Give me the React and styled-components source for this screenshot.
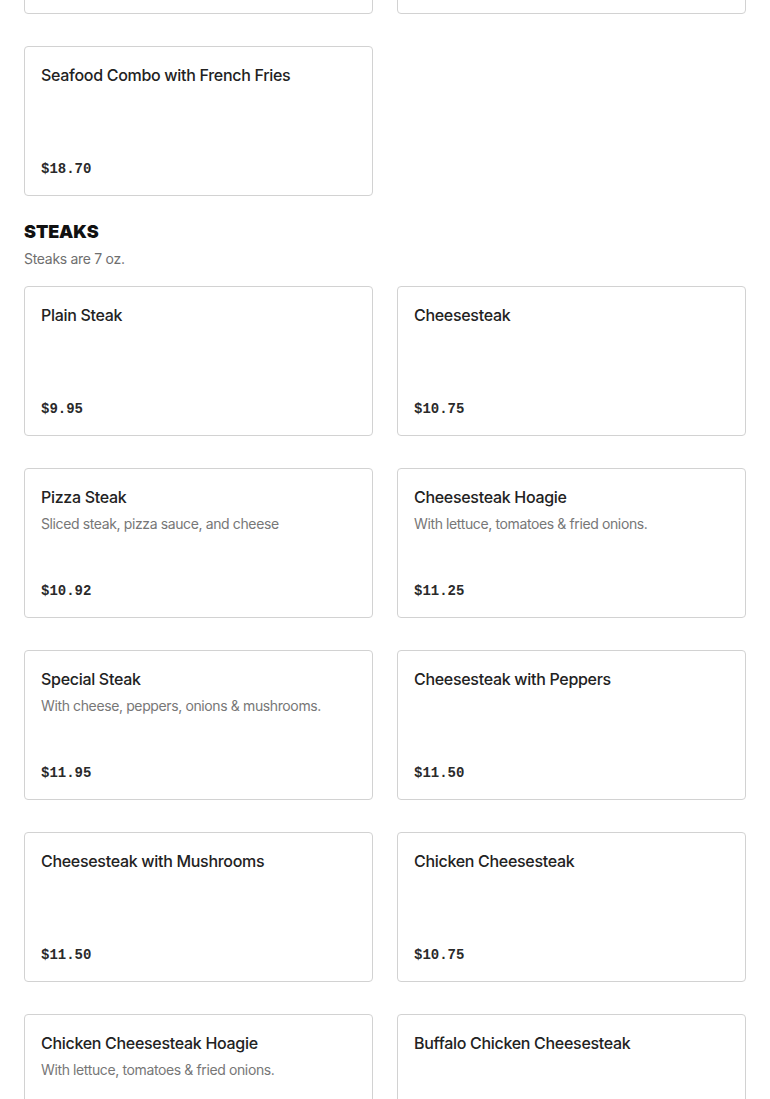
import React from "react";
import styled, { createGlobalStyle } from "styled-components";

const GlobalStyle = createGlobalStyle`
  html, body {
    margin: 0;
    padding: 0;
    background: #ffffff;
    overflow: hidden;
  }
  body {
    font-family: Inter, "Noto Sans", sans-serif;
    color: #222222;
  }
`;

const Page = styled.div`
  padding: 0 24px 40px;
  width: 770px;
  box-sizing: border-box;
`;

const Scrolled = styled.div`
  margin-top: -136px;
`;

const Section = styled.section`
  margin-top: ${(p) => (p.$first ? "0" : "25px")};
`;

const SectionTitle = styled.h2`
  margin: 0;
  font-family: Inter, sans-serif;
  font-size: 18px;
  font-weight: 900;
  line-height: 22px;
  color: #111111;
  letter-spacing: -0.1px;
`;

const SectionNote = styled.p`
  margin: 6px 0 17px;
  font-size: 14px;
  line-height: 20px;
  color: #6f6f6f;
  letter-spacing: -0.3px;
`;

const Grid = styled.div`
  display: grid;
  grid-template-columns: 349px 349px;
  column-gap: 24px;
  row-gap: 32px;
`;

const Card = styled.div`
  box-sizing: border-box;
  height: 150px;
  border: 1px solid #d2d2d2;
  border-radius: 4px;
  padding: 16px;
  display: flex;
  flex-direction: column;
  background: #fff;
`;

const ItemName = styled.div`
  font-size: 16px;
  font-weight: 500;
  line-height: 24px;
  color: #222222;
  letter-spacing: -0.3px;
`;

const ItemDesc = styled.div`
  margin-top: 5px;
  font-size: 14px;
  line-height: 20px;
  color: #777777;
  letter-spacing: -0.38px;
`;

const Price = styled.div`
  margin-top: auto;
  margin-bottom: -1px;
  font-family: "Liberation Mono", "DejaVu Sans Mono", monospace;
  font-size: 14px;
  font-weight: 700;
  line-height: 22px;
  color: #2a2a2a;
`;

const steaks = [
  { name: "Plain Steak", price: "$9.95" },
  { name: "Cheesesteak", price: "$10.75" },
  { name: "Pizza Steak", desc: "Sliced steak, pizza sauce, and cheese", price: "$10.92" },
  { name: "Cheesesteak Hoagie", desc: "With lettuce, tomatoes & fried onions.", price: "$11.25" },
  { name: "Special Steak", desc: "With cheese, peppers, onions & mushrooms.", price: "$11.95" },
  { name: "Cheesesteak with Peppers", price: "$11.50" },
  { name: "Cheesesteak with Mushrooms", price: "$11.50" },
  { name: "Chicken Cheesesteak", price: "$10.75" },
  { name: "Chicken Cheesesteak Hoagie", desc: "With lettuce, tomatoes & fried onions.", price: "$11.25" },
  { name: "Buffalo Chicken Cheesesteak", price: "$11.25" },
];

function MenuItem({ item }) {
  return (
    <Card>
      <ItemName>{item.name}</ItemName>
      {item.desc && <ItemDesc>{item.desc}</ItemDesc>}
      <Price>{item.price}</Price>
    </Card>
  );
}

export default function App() {
  return (
    <Page>
      <GlobalStyle />
      <Scrolled>
        <Section $first>
          <Grid>
            <Card />
            <Card />
            <MenuItem item={{ name: "Seafood Combo with French Fries", price: "$18.70" }} />
          </Grid>
        </Section>
        <Section>
          <SectionTitle>STEAKS</SectionTitle>
          <SectionNote>Steaks are 7 oz.</SectionNote>
          <Grid>
            {steaks.map((it) => (
              <MenuItem key={it.name} item={it} />
            ))}
          </Grid>
        </Section>
      </Scrolled>
    </Page>
  );
}
